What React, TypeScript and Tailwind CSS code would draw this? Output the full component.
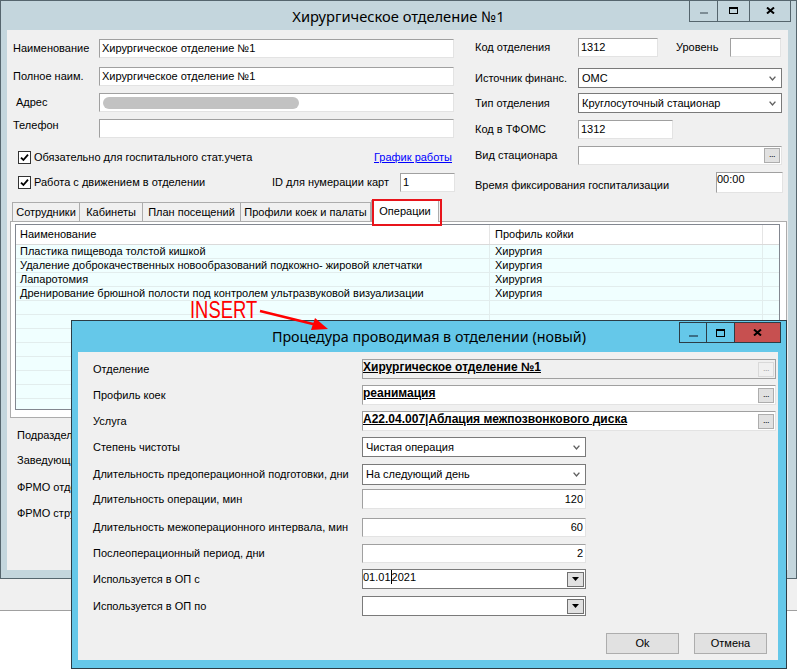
import React from 'react';

// small win-forms like controls
const TextBox: React.FC<{ className?: string; value?: string; right?: boolean; top?: boolean; children?: React.ReactNode }> = ({ className = '', value, right, top, children }) => (
  <div
    className={`bg-white border border-[#e3e3e3] border-t-[#a0a0a0] border-l-[#a0a0a0] flex px-[2px] whitespace-nowrap overflow-hidden ${right ? 'justify-end' : ''} ${top ? 'items-start' : 'items-center'} ${className}`}
  >
    {value}
    {children}
  </div>
);

const Chevron = () => (
  <svg width="7" height="5" viewBox="0 0 7 5">
    <path d="M0.6 0.6 L3.5 3.9 L6.4 0.6" fill="none" stroke="#606060" strokeWidth="1.4" />
  </svg>
);

const Combo: React.FC<{ className?: string; value: string }> = ({ className = '', value }) => (
  <div className={`h-[20px] bg-white border border-[#7a7a7a] flex items-center pl-[3px] pr-[5px] ${className}`}>
    <span className="flex-1 whitespace-nowrap">{value}</span>
    <Chevron />
  </div>
);

const Dots: React.FC<{ disabled?: boolean }> = ({ disabled }) => (
  <div
    className={`w-[16px] h-[15px] border flex items-end justify-center pb-[3px] text-[9px] leading-none tracking-[-0.5px] ${
      disabled ? 'border-[#d9d9d9] bg-[#f0f0f0] text-[#a0a0a0]' : 'border-[#adadad] bg-[#e1e1e1] text-black'
    }`}
  >
    ...
  </div>
);

const Check = () => (
  <div className="w-[13px] h-[13px] border border-[#333333] bg-white flex items-center justify-center">
    <svg width="9" height="9" viewBox="0 0 9 9">
      <path d="M1 4.6 L3.4 7 L8 1.6" fill="none" stroke="#000" strokeWidth="1.8" />
    </svg>
  </div>
);

const CloseX = () => (
  <svg width="9" height="7" viewBox="0 0 9 7">
    <path d="M1 0.5 L8 6.5 M8 0.5 L1 6.5" stroke="#000" strokeWidth="2" />
  </svg>
);

const rows = [
  'Пластика пищевода толстой кишкой',
  'Удаление доброкачественных новообразований подкожно- жировой клетчатки',
  'Лапаротомия',
  'Дренирование брюшной полости под контролем ультразвуковой визуализации',
];

const MainWindow = () => (
  <div className="relative h-[579px] border border-[#56666e] bg-[#c4d6dd] flex flex-col">
    <div className="h-[29px] flex items-center justify-center pt-[1px] text-[14.7px] font-['Noto_Sans',sans-serif]">
      Хирургическое отделение №1
    </div>
    <div className="absolute top-[-1px] right-[5px] flex h-[22px] border border-t-0 border-[#55656d]">
      <div className="w-[27px] flex items-center justify-center">
        <div className="w-[8px] h-[2px] bg-[#7d8d95] mt-[5px]" />
      </div>
      <div className="w-[32px] border-l border-[#55656d] flex items-center justify-center">
        <div className="w-[9px] h-[7px] border border-t-2 border-black" />
      </div>
      <div className="w-[41px] border-l border-[#55656d] flex items-center justify-center">
        <CloseX />
      </div>
    </div>

    <div className="ml-[6px] mr-[8px] h-[540px] bg-[#f0f0f0] flex flex-col">
      <div className="flex h-[168px]">
        {/* left column */}
        <div className="w-[448px] pl-[6px] flex flex-col">
          <div className="flex items-center h-[19px] mt-[9px]">
            <span className="w-[86px]">Наименование</span>
            <TextBox className="w-[355px] h-[19px]" value="Хирургическое отделение №1" />
          </div>
          <div className="flex items-center h-[19px] mt-[9px]">
            <span className="w-[86px]">Полное наим.</span>
            <TextBox className="w-[355px] h-[19px]" value="Хирургическое отделение №1" />
          </div>
          <div className="flex items-center h-[19px] mt-[7px]">
            <span className="w-[86px] pl-[3px]">Адрес</span>
            <TextBox className="w-[355px] h-[19px]">
              <div className="ml-px h-[12px] w-[196px] rounded-full bg-[#c2c2c2]" />
            </TextBox>
          </div>
          <div className="flex items-center h-[19px] mt-[7px]">
            <span className="w-[86px] self-start">Телефон</span>
            <TextBox className="w-[355px] h-[19px]" />
          </div>
          <div className="flex items-center h-[14px] mt-[12px] pl-[5px] pr-[3px]">
            <Check />
            <span className="ml-[3px]">Обязательно для госпитального стат.учета</span>
            <span className="ml-auto text-[#0000ff] underline">График работы</span>
          </div>
          <div className="flex items-center h-[19px] mt-[9px] pl-[5px]">
            <Check />
            <span className="ml-[3px]">Работа с движением в отделении</span>
            <span className="ml-auto">ID для нумерации карт</span>
            <TextBox className="ml-[11px] w-[55px] h-[19px]" value="1" />
          </div>
        </div>

        {/* right column */}
        <div className="ml-[20px] w-[308px] flex flex-col">
          <div className="flex items-center h-[19px] mt-[8px]">
            <span className="w-[103px]">Код отделения</span>
            <TextBox className="w-[80px] h-[19px]" value="1312" />
            <span className="ml-[18px] w-[54px]">Уровень</span>
            <TextBox className="w-[51px] h-[19px]" />
          </div>
          <div className="flex items-center h-[20px] mt-[11px]">
            <span className="w-[103px]">Источник финанс.</span>
            <Combo className="w-[204px]" value="ОМС" />
          </div>
          <div className="flex items-center h-[20px] mt-[5px]">
            <span className="w-[103px]">Тип отделения</span>
            <Combo className="w-[204px]" value="Круглосуточный стационар" />
          </div>
          <div className="flex items-center h-[19px] mt-[7px]">
            <span className="w-[103px]">Код в ТФОМС</span>
            <TextBox className="w-[95px] h-[19px]" value="1312" />
          </div>
          <div className="flex items-center h-[19px] mt-[7px]">
            <span className="w-[103px]">Вид стационара</span>
            <TextBox className="w-[204px] h-[19px] justify-end !pr-px">
              <Dots />
            </TextBox>
          </div>
          <div className="flex items-center h-[21px] mt-[7px]">
            <span className="flex-1 pt-[5px]">Время фиксирования госпитализации</span>
            <TextBox className="w-[67px] h-[21px] !px-0" value="00:00" top />
          </div>
        </div>
      </div>

      {/* tabs */}
      <div className="flex items-end h-[23px] pl-[5px]">
        <div className="w-[68px] h-[19px] border border-b-0 border-[#acacac] flex items-center justify-center">Сотрудники</div>
        <div className="w-[63px] h-[19px] border border-l-0 border-b-0 border-[#acacac] flex items-center justify-center">Кабинеты</div>
        <div className="w-[98px] h-[19px] border border-l-0 border-b-0 border-[#acacac] flex items-center justify-center">План посещений</div>
        <div className="w-[130px] h-[19px] border border-l-0 border-b-0 border-[#acacac] flex items-center justify-center">Профили коек и палаты</div>
        <div className="relative w-[68px] h-[22px] -mb-px bg-white border border-b-0 border-[#acacac] flex items-center justify-center z-10">
          Операции
          <div className="absolute left-0 top-[-2px] w-[70px] h-[27px] border-2 border-[#e8141b]" />
        </div>
      </div>

      {/* tab page with grid */}
      <div className="ml-[3px] w-[777px] h-[197px] border border-[#acacac] bg-white pl-[4px] pt-[2px]">
        <div className="w-[765px] h-[186px] border border-[#828790] bg-[#f0ffff] overflow-hidden">
          <div className="flex h-[20px] bg-white border-b border-[#dadada]">
            <div className="w-[474px] pl-[4px] flex items-center border-r border-[#e5e5e5]">Наименование</div>
            <div className="w-[273px] pl-[5px] flex items-center border-r border-[#e5e5e5]">Профиль койки</div>
            <div className="flex-1" />
          </div>
          {Array.from({ length: 12 }).map((_, i) => (
            <div key={i} className="flex h-[14px] border-b border-[#e2eded]">
              <div className="w-[474px] pl-[4px] flex items-center border-r border-[#e2eded] whitespace-nowrap">{rows[i] ?? ''}</div>
              <div className="w-[273px] pl-[5px] flex items-center border-r border-[#e2eded]">{rows[i] ? 'Хирургия' : ''}</div>
              <div className="flex-1" />
            </div>
          ))}
        </div>
      </div>

      {/* fields under the tabs, mostly hidden by the dialog */}
      <div className="flex flex-col pl-[10px]">
        <span className="mt-[11px]">Подразделение</span>
        <span className="mt-[12px]">Заведующий</span>
        <span className="mt-[14px]">ФРМО отделение</span>
        <span className="mt-[13px]">ФРМО структурное подразделение</span>
      </div>
    </div>
  </div>
);

const InsertNote = () => (
  <>
    <div className="absolute left-[190px] top-[297px] text-[23px] leading-[26px] text-[#ff0000] origin-left scale-x-[0.8]">
      INSERT
    </div>
    <svg className="absolute left-[255px] top-[303px]" width="78" height="32" viewBox="0 0 78 32">
      <path d="M5 8 L62 22" stroke="#ff0000" strokeWidth="2.4" />
      <path d="M73 26 L56 27 L60 15 Z" fill="#ff0000" />
    </svg>
  </>
);

const RefField: React.FC<{ value: string; disabled?: boolean; className?: string }> = ({ value, disabled, className = '' }) => (
  <div
    className={`w-[414px] h-[20px] border flex items-start justify-between pr-px ${
      disabled ? 'bg-[#f0f0f0] border-[#a0a0a0]' : 'bg-white border-[#e3e3e3] border-t-[#a0a0a0] border-l-[#a0a0a0]'
    } ${className}`}
  >
    <span className="font-bold underline text-[12px] leading-[15px] whitespace-nowrap">{value}</span>
    <div className="self-center">
      <Dots disabled={disabled} />
    </div>
  </div>
);

const DateBox: React.FC<{ children?: React.ReactNode; className?: string }> = ({ children, className = '' }) => (
  <div className={`w-[224px] h-[20px] bg-white border border-[#7a7a7a] flex items-start justify-between pr-px ${className}`}>
    <span className="flex items-center leading-[14px]">{children}</span>
    <div className="self-center w-[17px] h-[15px] bg-[#e1e1e1] border border-[#707070] flex items-center justify-center">
      <svg width="7" height="4" viewBox="0 0 7 4">
        <path d="M0 0 L7 0 L3.5 4 Z" fill="#000" />
      </svg>
    </div>
  </div>
);

const Row: React.FC<{ label: string; className: string; children: React.ReactNode }> = ({ label, className, children }) => (
  <div className={`flex items-center h-[20px] ${className}`}>
    <span className="w-[269px] whitespace-nowrap">{label}</span>
    {children}
  </div>
);

const ProcedureDialog = () => (
  <div className="absolute left-[71px] top-[320px] w-[716px] h-[349px] border border-[#2c3d46] bg-[#65c8e9] flex flex-col">
    <div className="h-[31px] flex items-center justify-center text-[14.3px] font-['Noto_Sans',sans-serif]">
      Процедура проводимая в отделении (новый)
    </div>
    <div className="absolute top-[1px] right-[5px] flex h-[21px] border border-[#2c3d46]">
      <div className="w-[26px] flex items-center justify-center">
        <div className="w-[9px] h-[2px] bg-[#3b6f86] mt-[7px]" />
      </div>
      <div className="w-[28px] border-l border-[#2c3d46] flex items-center justify-center">
        <div className="w-[9px] h-[8px] border border-t-2 border-black" />
      </div>
      <div className="w-[46px] border-l border-[#2c3d46] bg-[#c75050] flex items-center justify-center">
        <CloseX />
      </div>
    </div>

    <div className="ml-[6px] mr-[8px] h-[308px] bg-[#f0f0f0] flex flex-col pl-[15px]">
      <Row label="Отделение" className="mt-[7px]">
        <RefField value="Хирургическое отделение №1" disabled />
      </Row>
      <Row label="Профиль коек" className="mt-[6px]">
        <RefField value="реанимация" />
      </Row>
      <Row label="Услуга" className="mt-[6px]">
        <RefField value="A22.04.007|Аблация межпозвонкового диска" />
      </Row>
      <Row label="Степень чистоты" className="mt-[6px]">
        <Combo className="w-[224px]" value="Чистая операция" />
      </Row>
      <Row label="Длительность предоперационной подготовки, дни" className="mt-[7px]">
        <Combo className="w-[224px] h-[21px]" value="На следующий день" />
      </Row>
      <Row label="Длительность операции, мин" className="mt-[5px]">
        <TextBox className="w-[224px] h-[20px]" value="120" right />
      </Row>
      <Row label="Длительность межоперационного интервала, мин" className="mt-[8px]">
        <TextBox className="w-[224px] h-[19px]" value="60" right />
      </Row>
      <Row label="Послеоперационный период, дни" className="mt-[6px]">
        <TextBox className="w-[224px] h-[19px]" value="2" right />
      </Row>
      <Row label="Используется в ОП с" className="mt-[6px]">
        <DateBox>
          01.01<span className="inline-block w-px h-[14px] bg-black" />2021
        </DateBox>
      </Row>
      <Row label="Используется в ОП по" className="mt-[7px]">
        <DateBox />
      </Row>
      <div className="flex justify-end h-[21px] mt-[17px] pr-[11px] gap-[15px]">
        <div className="w-[73px] h-[21px] bg-[#e1e1e1] border border-[#adadad] flex items-center justify-center">Ok</div>
        <div className="w-[73px] h-[21px] bg-[#e1e1e1] border border-[#adadad] flex items-center justify-center">Отмена</div>
      </div>
    </div>
  </div>
);

export default function App() {
  return (
    <div className="relative w-[797px] h-[670px] overflow-hidden bg-white text-[11px] leading-[13px] text-black font-['Liberation_Sans',Arial,sans-serif]">
      <MainWindow />
      <div className="h-[32px] bg-[#f0f0f0] border-b border-[#a0a0a0]" />
      <ProcedureDialog />
      <InsertNote />
    </div>
  );
}
